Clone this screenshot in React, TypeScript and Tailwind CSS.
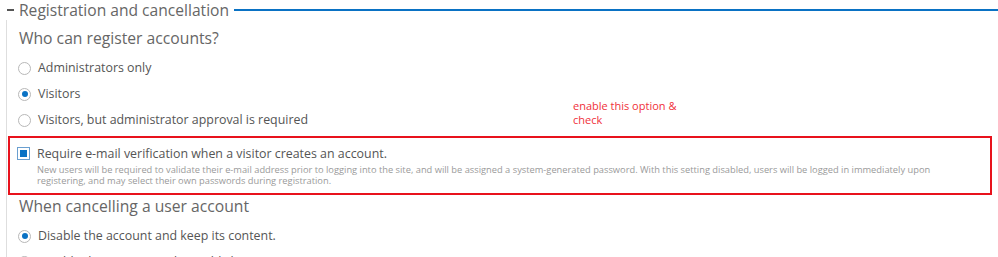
import React from "react";

function Radio({ checked }: { checked?: boolean }) {
  return (
    <span className="flex h-[13px] w-[13px] shrink-0 items-center justify-center rounded-full border border-[#b8b8b8] bg-white">
      {checked && <span className="h-[6px] w-[6px] rounded-full bg-[#0a72c4]" />}
    </span>
  );
}

function Option({ label, checked }: { label: string; checked?: boolean }) {
  return (
    <label className="flex h-[26px] items-center gap-[7px] pl-[10px] text-[12.4px] text-[#555]">
      <Radio checked={checked} />
      <span>{label}</span>
    </label>
  );
}

export default function App() {
  return (
    <div className="h-[257px] w-[998px] overflow-hidden bg-white font-['Open_Sans',sans-serif]">
      {/* legend row */}
      <div className="flex h-[20px] items-center">
        <div className="ml-[7px] h-[2px] w-[7px] bg-[#555]" />
        <span className="px-[5px] text-[15.6px] leading-[20px] text-[#666]">Registration and cancellation</span>
        <div className="h-[2px] flex-1 bg-[#0a72c4]" />
      </div>

      <div className="ml-[6px] border-l border-[#dedede] pl-[1px]">
        <h3 className="pl-[11px] pt-[6px] text-[15.7px] leading-[24px] text-[#666]">Who can register accounts?</h3>
        <div className="pt-[5px]">
          <Option label="Administrators only" />
          <Option label="Visitors" checked />
          <Option label="Visitors, but administrator approval is required" />
        </div>

        <div className="relative mt-[3px]">
          <div className="absolute left-[565px] top-[-37px] text-[11px] leading-[14px] text-[#f0303a]">
            <div>enable this option &amp;</div>
            <div>check</div>
          </div>
          <div className="mr-[6px] border-2 border-[#e8121c] pb-[7px] pl-[7px] pr-[20px] pt-[7px]">
            <label className="flex items-center gap-[7px] text-[12.4px] leading-[17px] text-[#555]">
              <span className="flex h-[13px] w-[13px] shrink-0 items-center justify-center border border-[#6a9fd0] bg-white">
                <span className="h-[7px] w-[7px] bg-[#0a72c4]" />
              </span>
              <span>Require e-mail verification when a visitor creates an account.</span>
            </label>
            <p className="pl-[20px] pt-[2px] text-[9.3px] leading-[11px] text-[#9a9a9a]">
              New users will be required to validate their e-mail address prior to logging into the site, and will be assigned a system-generated password. With this setting disabled, users will be logged in immediately upon registering, and may select their own passwords during registration.
            </p>
          </div>
        </div>

        <h3 className="pl-[11px] text-[15.7px] leading-[22px] text-[#666]">When cancelling a user account</h3>
        <div className="pt-[6px]">
          <Option label="Disable the account and keep its content." checked />
          <Option label="Disable the account and unpublish its content." />
        </div>
      </div>
    </div>
  );
}
